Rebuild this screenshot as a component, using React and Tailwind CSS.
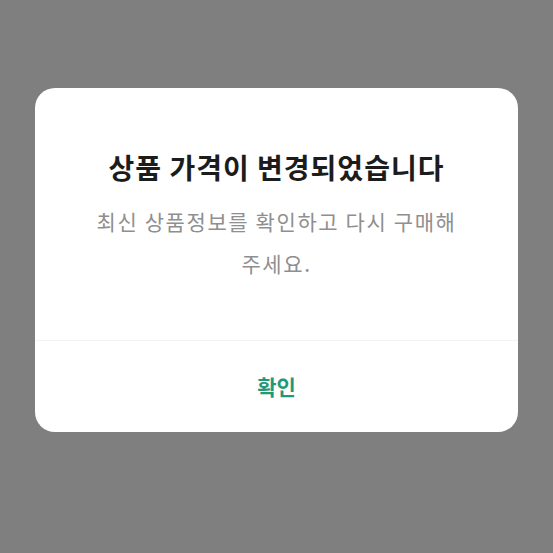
export default function App() {
  return (
    <div
      className="w-[553px] h-[553px] bg-[#7f7f7f] flex flex-col items-center pt-[88px]"
      style={{ fontFamily: '"Noto Sans CJK KR", "Noto Sans", sans-serif' }}
    >
      <div className="w-[483px] h-[344px] bg-white rounded-[20px] flex flex-col overflow-hidden">
        <div className="h-[252px] flex flex-col items-center pt-[59px] px-6 text-center">
          <h2 className="text-[28px] leading-[40px] font-bold text-[#1c1c1c] tracking-[1px]">
            상품 가격이 변경되었습니다
          </h2>
          <p className="mt-[13px] text-[21px] leading-[42px] text-[#8f8f8f] tracking-[1.6px] w-[390px] break-keep">
            최신 상품정보를 확인하고 다시 구매해 주세요.
          </p>
        </div>
        <div className="h-px bg-[#f3f3f3]" />
        <button className="flex-1 flex items-center justify-center text-[21px] font-bold text-[#1f9a78]">
          확인
        </button>
      </div>
    </div>
  );
}
